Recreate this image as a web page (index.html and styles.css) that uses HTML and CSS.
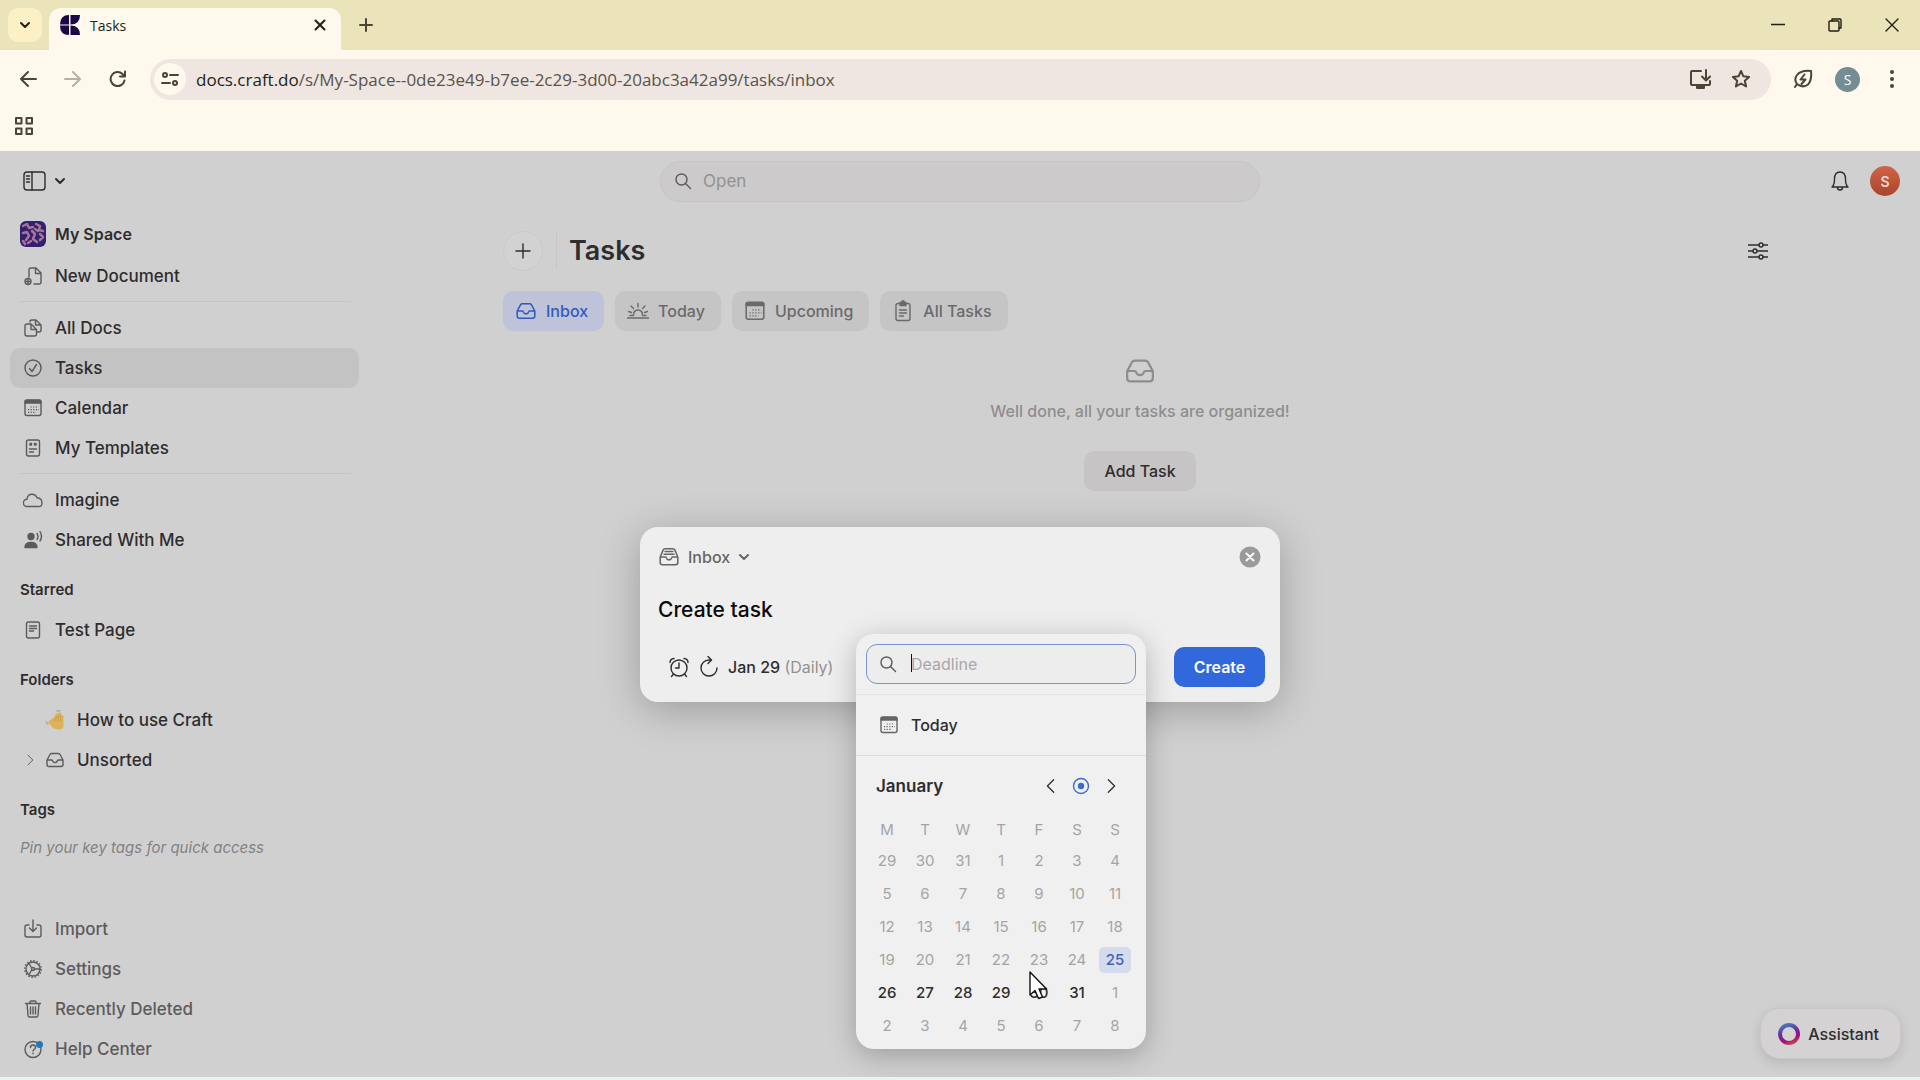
FILE: index.html
```html
<!DOCTYPE html>
<html lang="en">
<head>
<meta charset="utf-8">
<title>Tasks</title>
<link rel="stylesheet" href="styles.css">
</head>
<body>
<svg class="sprite" aria-hidden="true">
  <symbol id="chevron-down" viewBox="0 0 12 12"><path d="M2 4l4 4 4-4"/></symbol>
  <symbol id="chevron-left" viewBox="0 0 20 20"><path d="M13 3l-7 7 7 7"/></symbol>
  <symbol id="chevron-right" viewBox="0 0 20 20"><path d="M7 3l7 7-7 7"/></symbol>
  <symbol id="search" viewBox="0 0 18 18"><circle cx="7.500" cy="7.500" r="5.500"/><path d="M11.500 11.500l5 5"/></symbol>
  <symbol id="tray" viewBox="0 0 20 20"><path d="M2 10l3-5.500q.6-1 1.700-1h6.600q1.100 0 1.700 1L18 10v4.500q0 2-2 2H4q-2 0-2-2V10h4.500q.9 0 1.100.8a2.500 2.500 0 0 0 4.800 0q.2-.8 1.100-.8H18"/></symbol>
  <symbol id="tray-full" viewBox="0 0 20 20"><path d="M2 10l2.500-6q.6-1.500 2.200-1.500h6.600q1.600 0 2.200 1.500L18 10v5q0 2-2 2H4q-2 0-2-2v-5h4.500q.9 0 1.100.8a2.500 2.500 0 0 0 4.800 0q.2-.8 1.100-.8H18M6.500 5h7M5.500 7.500h9"/></symbol>
  <symbol id="calendar" viewBox="0 0 20 20"><rect x="2" y="2.500" width="16" height="15" rx="2"/><path d="M2 3.500q0-1.500 2-1.500h12q2 0 2 1.500V5H2z" fill="currentColor"/><path d="M7.600 9h8M5 11.700h11M5 14.400h8" stroke-dasharray="1.200 1.400" stroke-linecap="butt" stroke-width="1.200"/></symbol>
</svg>

<header class="browser">
  <div class="tabstrip">
    <button class="tabsearch" aria-label="Search tabs"><svg class="i12 heavy"><use href="#chevron-down"/></svg></button>
    <div class="tab">
      <svg class="favicon" viewBox="0 0 20 20"><path d="M9 0v9.500H0Q0 0 9 0zM9 20v-9.500H0Q0 20 9 20zM10.500 0H20q0 9.500-9.500 9.500zM10.500 20H20q0-9.500-9.500-9.500z"/></svg>
      <span class="tabtitle">Tasks</span>
      <button class="bare" aria-label="Close tab"><svg class="i12 heavy" viewBox="0 0 12 12"><path d="M1.500 1.500l9 9M10.500 1.500l-9 9"/></svg></button>
    </div>
    <button class="bare newtab" aria-label="New tab"><svg class="i14 heavy" viewBox="0 0 14 14"><path d="M7 1v12M1 7h12"/></svg></button>
    <div class="winctl">
      <button class="bare" aria-label="Minimize"><svg class="i14" viewBox="0 0 14 14"><path d="M0 6.500h14"/></svg></button>
      <button class="bare" aria-label="Restore"><svg class="i14" viewBox="0 0 14 14"><rect x="1" y="3" width="10" height="10" rx="1"/><path d="M4 3V1h8q1 0 1 1v8h-2"/></svg></button>
      <button class="bare" aria-label="Close"><svg class="i14" viewBox="0 0 14 14"><path d="M1 1l12 12M13 1L1 13"/></svg></button>
    </div>
  </div>
  <div class="toolbar">
    <button class="bare nav" aria-label="Back"><svg class="i18 heavy" viewBox="0 0 18 18"><path d="M17 9H2M9 2L2 9l7 7"/></svg></button>
    <button class="bare nav faded" aria-label="Forward"><svg class="i18 heavy" viewBox="0 0 18 18"><path d="M1 9h15M9 2l7 7-7 7"/></svg></button>
    <button class="bare nav" aria-label="Reload"><svg class="i18 heavy" viewBox="0 0 18 18"><path d="M15.500 10.500a7 7 0 1 1-2-6.500l2.500 2.500M16 1.500v5h-5"/></svg></button>
    <div class="urlbar">
      <button class="bare site" aria-label="Site information"><svg class="i18 heavy" viewBox="0 0 18 18"><circle cx="4" cy="5" r="2"/><path d="M9 5h8M1 13h8"/><circle cx="14" cy="13" r="2"/></svg></button>
      <span class="url"><b>docs.craft.do</b>/s/My-Space--0de23e49-b7ee-2c29-3d00-20abc3a42a99/tasks/inbox</span>
      <button class="bare" aria-label="Install app"><svg class="i22 heavy" viewBox="0 0 22 22"><path d="M12 3H3q-1 0-1 1v12q0 1 1 1h17q1 0 1-1v-3M17 2v10M13 8.500l4 4 4-4"/><path d="M8 17.500h7V20H8z" fill="currentColor"/></svg></button>
      <button class="bare" aria-label="Bookmark"><svg class="i20 heavy" viewBox="0 0 20 20"><path d="M10 2l2.400 5.300 5.700.6-4.300 3.800 1.300 5.800-5.100-3-5.100 3 1.300-5.800L1.900 7.900l5.700-.6z"/></svg></button>
    </div>
    <button class="bare" aria-label="Energy saver"><svg class="i20 heavy" viewBox="0 0 20 20"><path d="M2 18l2-3a7.500 7.500 0 0 1 0-9Q8 1 18 2q1 9-3 13.500-5 4-11-.500"/><path d="M11.500 5.500l-4 5h5l-4 4.500"/></svg></button>
    <button class="profile" aria-label="Profile">S</button>
    <button class="bare" aria-label="Menu"><svg class="i20 solid" viewBox="0 0 20 20"><circle cx="10" cy="3" r="2"/><circle cx="10" cy="10" r="2"/><circle cx="10" cy="17" r="2"/></svg></button>
  </div>
  <div class="bookmarks">
    <button class="bare" aria-label="Apps"><svg class="i20 heavy" viewBox="0 0 20 20"><path d="M2 2h5.500v5.500H2zM12.500 2H18v5.500h-5.500zM2 12.500h5.500V18H2zM12.500 12.500H18V18h-5.500z"/></svg></button>
  </div>
</header>

<div class="app">
  <div class="topbar">
    <div class="topleft">
      <button class="bare" aria-label="Toggle sidebar"><svg class="i24" viewBox="0 0 24 24"><rect x="1" y="3" width="21" height="18" rx="3"/><path d="M9 3v18M3.500 7h3M3.500 10h3M3.500 13h3"/></svg></button>
      <button class="bare" aria-label="View options"><svg class="i12 heavy"><use href="#chevron-down"/></svg></button>
    </div>
    <label class="opensearch"><svg class="i18"><use href="#search"/></svg><input type="text" placeholder="Open" aria-label="Open"></label>
    <div class="topright">
      <button class="bare" aria-label="Notifications"><svg class="i22" viewBox="0 0 22 22"><path d="M3 17q2.500-2 2.500-8 0-7 5.500-7t5.500 7q0 6 2.500 8zM8.500 17.500a2.500 2.500 0 0 0 5 0"/></svg></button>
      <button class="avatar" aria-label="Account">S</button>
    </div>
  </div>

  <div class="columns">
    <aside class="sidebar">
      <nav>
        <a class="row space" href="#"><svg class="spacelogo" viewBox="0 0 26 26"><rect width="26" height="26" rx="6" fill="#35206f"/><path d="M3 5l4-2 2 4 4-1M16 3l4 2-1 4 4 1M3 12l4-1 2 4-3 4M12 10l3 3-2 5 4 3M20 13l3 3-3 3M8 22l3-2M15 8l3 2M3 20l2 3" fill="none" stroke="#a5759c" stroke-width="2.500"/></svg><span>My Space</span></a>
        <a class="row" href="#"><svg class="i20" viewBox="0 0 20 20"><path d="M6 11V4q0-2 2-2h5l5 5v9q0 2-2 2h-5M12.500 2v5.500H18"/><circle cx="5" cy="15.500" r="3"/><path d="M5 13.500v4M3 15.500h4"/></svg>New Document</a>
        <hr>
        <a class="row" href="#"><svg class="i20" viewBox="0 0 20 20"><path d="M7 4V3.500Q7 2 9 2h4L18 7v5q0 2-2 2h-1.500M12.500 2v5H18M8 6H4Q2 6 2 8v8q0 2 2 2h7.500q2 0 2-2v-4.500zM8 6v5.500h5.500"/></svg>All Docs</a>
        <a class="row active" href="#"><svg class="i20" viewBox="0 0 20 20"><circle cx="10" cy="10" r="8"/><path d="M6.500 10.500l2.500 3 4.500-7"/></svg>Tasks</a>
        <a class="row" href="#"><svg class="i20"><use href="#calendar"/></svg>Calendar</a>
        <a class="row" href="#"><svg class="i20" viewBox="0 0 20 20"><rect x="3.500" y="2" width="13" height="16" rx="2"/><path d="M7 5.500h1.500V7H7zM11.500 5.500H13V7h-1.500z" fill="currentColor"/><path d="M6.500 11h7M6.500 14h4"/></svg>My Templates</a>
        <hr>
        <a class="row" href="#"><svg class="i20" viewBox="0 0 20 20"><path d="M4 16.500a3.600 3.600 0 0 1 0-7.200q.5-5 5-5 3.500 0 5 3.500 5 .5 5 5t-4 3.700z"/></svg>Imagine</a>
        <a class="row" href="#"><svg class="i20" viewBox="0 0 20 20"><g fill="currentColor"><circle cx="8" cy="6.500" r="3"/><path d="M2 17.500q0-5 6-5t6 5z"/></g><path d="M14 3.500q2 3 0 6M17 1.500q3 5 0 9.500"/></svg>Shared With Me</a>
        <h2>Starred</h2>
        <a class="row" href="#"><svg class="i20" viewBox="0 0 20 20"><rect x="3.500" y="2" width="13" height="16" rx="2"/><path d="M6.500 6h7M6.500 8.500h7M6.500 11h4"/></svg>Test Page</a>
        <h2>Folders</h2>
        <a class="row nested" href="#"><svg class="i20 wave" viewBox="0 0 20 20"><path d="M3 12L10 6l1-3 2 1 1-2 2 1 1 2 1.500 1V17q-1 3-5 2.500-6-1-7-3.500z" fill="#dcb35a" stroke="none"/><path d="M9.500 11l2.500-5M12.500 11l1.500-6M15.500 11V6.500" stroke="#c99c48" stroke-width="1"/><path d="M1 12l2 2M12 1l3-.5" stroke="#a9a7a8"/></svg>How to use Craft</a>
        <a class="row nested" href="#"><svg class="i14 twist"><use href="#chevron-right"/></svg><svg class="i20"><use href="#tray"/></svg>Unsorted</a>
        <h2>Tags</h2>
        <p class="hint">Pin your key tags for quick access</p>
      </nav>
      <nav class="foot">
        <a class="row" href="#"><svg class="i20" viewBox="0 0 20 20"><path d="M6 6H4Q2 6 2 8v8q0 2 2 2h12q2 0 2-2V8q0-2-2-2h-2M10 1v11M6.500 9l3.500 3.500L13.500 9"/></svg>Import</a>
        <a class="row" href="#"><svg class="i20" viewBox="0 0 20 20"><circle cx="10" cy="10" r="7"/><circle cx="10" cy="10" r="8.300" stroke-linecap="butt" stroke-dasharray="1.600 1.660"/><circle cx="10" cy="10" r="1.500"/><path d="M8.700 9L6 4.500M8.700 11L6 15.500M11.500 10H17"/></svg>Settings</a>
        <a class="row" href="#"><svg class="i20" viewBox="0 0 20 20"><path d="M2.500 4.500h15M7 4.500V3q0-1 1-1h4q1 0 1 1v1.500M4 4.500l1 12q.1 1.500 1.500 1.500h7q1.400 0 1.500-1.500l1-12M7.500 8v7M10 8v7M12.500 8v7"/></svg>Recently Deleted</a>
        <a class="row" href="#"><svg class="i20" viewBox="0 0 20 20"><circle cx="10" cy="10.500" r="8"/><path d="M7.500 8.500q0-2.500 2.500-2.500t2.500 2.500q0 1.200-1.500 2-1 .6-1 1.500M10 14.200v.6"/><circle cx="16.500" cy="5.500" r="3.500" fill="#2277bb" stroke="none"/></svg>Help Center</a>
      </nav>
    </aside>

    <main class="main">
      <div class="titlebar">
        <button class="add" aria-label="Add"><svg class="i16" viewBox="0 0 16 16"><path d="M8 1v14M1 8h14"/></svg></button>
        <h1>Tasks</h1>
        <button class="bare" aria-label="Filter"><svg class="i20" viewBox="0 0 20 20"><path d="M0 4h11M15 4h5M0 10h5M9 10h11M0 16h11M15 16h5"/><circle cx="13" cy="4" r="2"/><circle cx="7" cy="10" r="2"/><circle cx="13" cy="16" r="2"/></svg></button>
      </div>
      <div class="pills">
        <button class="pill on"><svg class="i22"><use href="#tray"/></svg>Inbox</button>
        <button class="pill"><svg class="i22" viewBox="0 0 22 22"><path d="M0 18h22M3 15.500h3.500M15.500 15.500H19M6.500 15.500q0-5.500 4.500-5.500t4.500 5.500M11 3.500V7M4 6l2.500 2.500M18 6l-2.500 2.500M1.500 11.500l3 1M20.500 11.500l-3 1"/></svg>Today</button>
        <button class="pill"><svg class="i22"><use href="#calendar"/></svg>Upcoming</button>
        <button class="pill"><svg class="i22" viewBox="0 0 22 22"><rect x="4" y="3.500" width="14" height="17" rx="2"/><path d="M8 2.500h6v3H8zM10 1h2v2h-2z" fill="currentColor"/><path d="M7.500 10h7M7.500 13h7M7.500 16h4"/></svg>All Tasks</button>
      </div>
      <section class="empty">
        <svg class="i32" viewBox="0 0 20 20"><use href="#tray"/></svg>
        <p>Well done, all your tasks are organized!</p>
        <button>Add Task</button>
      </section>
    </main>
  </div>

  <button class="assistant"><span class="ring"></span>Assistant</button>

  <div class="overlay">
    <form class="dialog">
      <div class="dhead">
        <button type="button" class="bare where"><svg class="i22"><use href="#tray-full"/></svg>Inbox<svg class="i12 heavy"><use href="#chevron-down"/></svg></button>
        <button type="button" class="bare" aria-label="Close"><svg class="i22" viewBox="0 0 22 22"><circle cx="11" cy="11" r="10.500" fill="#9b9a9b" stroke="none"/><path d="M7.500 7.500l7 7M14.500 7.500l-7 7" stroke="#fff" stroke-width="2"/></svg></button>
      </div>
      <input class="taskname" type="text" value="Create task" aria-label="Task name">
      <div class="dfoot">
        <button type="button" class="bare when"><svg class="i22" viewBox="0 0 22 22"><circle cx="11" cy="12" r="8"/><path d="M11 7v5H7.500M5.500 18L3.500 20.500M16.500 18l2 2.500M2 6.500q0-3.500 4-4M20 6.500q0-3.500-4-4"/></svg><svg class="i22" viewBox="0 0 22 22"><path d="M19 12a8 8 0 1 1-8-8h2M10 0.500L13.500 4 10 7.500"/></svg><span>Jan 29 <i>(Daily)</i></span></button>
        <button type="button" class="create">Create</button>
      </div>

      <div class="popover">
        <label class="deadline"><svg class="i18"><use href="#search"/></svg><span class="caret"></span><input type="text" placeholder="Deadline" aria-label="Deadline"></label>
        <button type="button" class="today"><svg class="i20"><use href="#calendar"/></svg>Today</button>
        <div class="month">
          <h3>January</h3>
          <button type="button" class="bare" aria-label="Previous month"><svg class="i18"><use href="#chevron-left"/></svg></button>
          <button type="button" class="bare now" aria-label="Current month"><svg class="i18" viewBox="0 0 18 18"><circle cx="9" cy="9" r="7.500"/><circle cx="9" cy="9" r="2.500" fill="currentColor"/></svg></button>
          <button type="button" class="bare" aria-label="Next month"><svg class="i18"><use href="#chevron-right"/></svg></button>
        </div>
        <table>
          <thead><tr><th>M</th><th>T</th><th>W</th><th>T</th><th>F</th><th>S</th><th>S</th></tr></thead>
          <tbody>
            <tr><td>29</td><td>30</td><td>31</td><td>1</td><td>2</td><td>3</td><td>4</td></tr>
            <tr><td>5</td><td>6</td><td>7</td><td>8</td><td>9</td><td>10</td><td>11</td></tr>
            <tr><td>12</td><td>13</td><td>14</td><td>15</td><td>16</td><td>17</td><td>18</td></tr>
            <tr><td>19</td><td>20</td><td>21</td><td>22</td><td>23</td><td>24</td><td><span class="cur">25</span></td></tr>
            <tr class="open"><td>26</td><td>27</td><td>28</td><td>29</td><td>30</td><td>31</td><td class="out">1</td></tr>
            <tr><td>2</td><td>3</td><td>4</td><td>5</td><td>6</td><td>7</td><td>8</td></tr>
          </tbody>
        </table>
        <svg class="pointer" viewBox="0 0 20 29"><path d="M1 1v23l5-4.500 3.500 8 4-1.500-3.500-8h7.500z"/></svg>
      </div>
    </form>
  </div>
</div>
</body>
</html>
```
FILE: styles.css
```css
* { box-sizing: border-box; }
body {
  margin: 0;
  min-height: 100vh;
  display: flex;
  flex-direction: column;
  font-family: Inter, sans-serif;
  font-size: 16px;
  color: #2e2d2e;
  background: #d1d0d1;
  border-bottom: 3px solid #e8f4ef;
}
h1, h2, h3, p { margin: 0; }
button, input { font: inherit; color: inherit; }
button { border: 0; padding: 0; background: none; display: flex; align-items: center; justify-content: center; }
input { border: 0; padding: 0; background: none; min-width: 0; outline: none; }
a { color: inherit; text-decoration: none; }
svg { flex: none; fill: none; stroke: currentColor; stroke-width: 1.4; stroke-linecap: round; stroke-linejoin: round; }
.sprite { position: absolute; width: 0; height: 0; }
.i12 { width: 12px; height: 12px; }
.i14 { width: 14px; height: 14px; }
.i16 { width: 16px; height: 16px; }
.i18 { width: 18px; height: 18px; }
.i20 { width: 20px; height: 20px; }
.i22 { width: 22px; height: 22px; }
.i24 { width: 24px; height: 24px; }
.i32 { width: 32px; height: 32px; }
.heavy { stroke-width: 2; }
.solid { fill: currentColor; stroke: none; }

/* Browser frame */
.browser { background: #fff8ec; color: #4b4536; font-family: "Open Sans", sans-serif; }
.tabstrip { height: 50px; padding-left: 8px; display: flex; align-items: center; background: #ebe3ba; }
.tabsearch { width: 34px; height: 34px; border-radius: 10px; background: #fbf1c4; color: #221f14; }
.tab {
  align-self: flex-end;
  width: 292px; height: 42px; margin-left: 7px; padding: 0 15px 8px 11px;
  display: flex; align-items: center; gap: 10px;
  border-radius: 12px 12px 0 0; background: #fff8ec; color: #221f14;
}
.favicon { width: 20px; height: 20px; fill: #190845; stroke: none; }
.tabtitle { flex: 1; font-size: 14px; }
.newtab { width: 50px; height: 34px; }
.winctl { margin-left: auto; display: flex; color: #221f14; }
.winctl button { width: 57px; height: 50px; }
.toolbar { height: 58px; padding: 0 18px 0 18px; display: flex; align-items: center; gap: 22px; }
.nav { width: 20px; }
.nav + .nav { margin-left: 3px; }
.faded { opacity: .4; }
.urlbar {
  flex: 1; height: 41px; padding: 0 20px 0 4px;
  display: flex; align-items: center; gap: 20px;
  border-radius: 21px; background: #efe6e1;
}
.site { width: 32px; height: 32px; border-radius: 50%; background: #fff8ec; margin-right: -10px; }
.url { flex: 1; font-size: 17px; white-space: nowrap; color: #5a534b; }
.url b { font-weight: 400; color: #221f14; }
.profile { width: 25px; height: 25px; border-radius: 50%; background: #748c93; color: #fff; font-size: 14px; }
.bookmarks { height: 43px; padding: 0 14px 8px; display: flex; align-items: center; }

/* App shell */
.app { position: relative; flex: 1; display: flex; flex-direction: column; }
.topbar { height: 60px; padding: 0 20px; display: grid; grid-template-columns: 1fr 600px 1fr; align-items: center; }
.topleft, .topright { display: flex; align-items: center; }
.topleft { padding-left: 3px; gap: 7px; }
.topright { justify-content: flex-end; gap: 19px; }
.opensearch {
  height: 41px; padding: 0 13px; display: flex; align-items: center; gap: 11px;
  border-radius: 20px; border: 1px solid #c6c4c5; background: #cccacb; color: #5c5b5c; font-size: 17px;
}
::placeholder { color: #929192; opacity: 1; }
.avatar { width: 30px; height: 30px; border-radius: 50%; background: linear-gradient(#d2634a, #a8452a); color: #f0dcd6; font-size: 14px; font-weight: 600; }
.columns { flex: 1; display: flex; }

.sidebar { width: 360px; padding: 0 0 8px; display: flex; flex-direction: column; }
.sidebar nav { padding: 0 1px 0 10px; }
.sidebar .foot { margin-top: auto; color: #5c5b5c; }
.row { height: 40px; padding-left: 13px; display: flex; align-items: center; gap: 12px; border-radius: 10px; font-size: 17px; font-weight: 500; }
.row svg { color: #5c5b5c; }
.space { height: 45px; padding-left: 10px; gap: 9px; font-size: 16px; font-weight: 600; }
.spacelogo { width: 26px; height: 26px; stroke: none; }
.active { background: #c4c3c4; }
.sidebar hr { height: 1px; margin: 5px 8px 6px 10px; border: 0; background: #c6c4c5; }
.sidebar h2 { padding: 20px 0 0 10px; height: 50px; font-size: 15px; line-height: 20px; font-weight: 600; }
.nested { padding-left: 35px; }
.twist { margin-left: -22px; margin-right: -4px; }
.hint { padding: 8px 10px; font-size: 15px; line-height: 20px; font-style: italic; color: #828182; }

.main { flex: 1; padding: 20px 143px 0; }
.titlebar { height: 40px; display: flex; align-items: center; }
.add { width: 40px; height: 40px; border-radius: 50%; background: #d3d2d3; border: 1px solid #cbc9ca; }
.titlebar h1 { flex: 1; margin-left: 13px; padding-left: 12px; border-left: 1px solid #c6c4c5; font-size: 27px; line-height: 36px; font-weight: 600; }
.titlebar .bare { margin-right: 9px; }
.pills { display: flex; gap: 11px; margin-top: 20px; }
.pill { height: 40px; padding: 0 16px 0 12px; gap: 9px; border-radius: 10px; background: #c6c5c6; color: #6b6a6b; font-weight: 500; }
.on { background: #bec3d9; color: #315bb8; }
.empty { display: flex; flex-direction: column; align-items: center; padding-top: 24px; color: #8e8d8e; font-weight: 500; }
.empty p { margin-top: 14px; line-height: 20px; }
.empty button { height: 40px; margin-top: 30px; padding: 0 20px; border-radius: 10px; background: #c6c4c5; color: #2e2d2e; }

.assistant {
  position: absolute; right: 19px; bottom: 18px;
  height: 51px; padding: 0 21px 0 17px; gap: 8px;
  border-radius: 20px; border: 1px solid #c9c7c8; background: #d4d2d3;
  box-shadow: 0 4px 12px rgba(0, 0, 0, .12);
  font-weight: 500;
}
.ring { width: 22px; height: 22px; border-radius: 50%; border: 4px solid transparent; background: linear-gradient(#d4d2d3, #d4d2d3) padding-box, linear-gradient(160deg, #3b9bc4, #6a2c9c 45%, #a80f78 70%, #dc6a50) border-box; }

/* Create-task dialog */
.overlay { position: absolute; inset: 0; padding-top: 376px; display: flex; justify-content: center; align-items: flex-start; }
.dialog {
  position: relative; width: 640px; height: 175px; padding: 19px 15px 15px 18px;
  display: flex; flex-direction: column; justify-content: space-between;
  border-radius: 18px; background: #efeeef; box-shadow: 0 8px 40px rgba(0, 0, 0, .25);
}
.dhead, .dfoot { display: flex; justify-content: space-between; align-items: center; }
.dhead { padding-right: 4px; }
.where { gap: 8px; font-weight: 500; color: #666566; }
.taskname { margin-top: 5px; font-size: 21px; line-height: 28px; height: 28px; font-weight: 500; color: #0a0a0a; }
.when { gap: 8px; padding-left: 10px; font-weight: 500; }
.when i { font-style: normal; font-weight: 400; color: #929192; }
.create { width: 91px; height: 40px; border-radius: 10px; background: #3169dd; color: #fff; font-weight: 600; }

.popover {
  position: absolute; left: 216px; top: 107px; width: 290px; height: 415px;
  border-radius: 18px; background: #f0f0f0; box-shadow: 0 6px 28px rgba(0, 0, 0, .25);
}
.deadline {
  position: relative; height: 40px; margin: 10px; padding: 0 12px; display: flex; align-items: center; gap: 14px;
  border-radius: 11px; border: 1px solid #7f93cf; color: #5c5b5c; background: #eeedee;
}
.deadline ::placeholder { color: #a8a7a8; }
.caret { position: absolute; left: 44px; top: 9px; width: 1px; height: 18px; background: #111; }
.today { width: 100%; height: 62px; padding-left: 23px; gap: 12px; justify-content: flex-start; border-top: 1px solid #e6e5e6; border-bottom: 1px solid #dedddE; font-weight: 500; }
.today svg { color: #666566; }
.month { height: 60px; padding: 0 26px 0 20px; display: flex; align-items: center; gap: 12px; }
.month h3 { flex: 1; font-size: 17px; font-weight: 600; }
.now { color: #3f6cc9; }
table { width: 266px; margin: 0 12px; border-collapse: collapse; table-layout: fixed; font-size: 15px; color: #a5a4a5; }
th, td { height: 33px; padding: 0; text-align: center; font-weight: 400; line-height: 20px; }
th { height: 28px; }
.open td { color: #2e2d2e; font-weight: 500; }
.open .out { color: #a5a4a5; font-weight: 400; }
.cur { display: block; width: 32px; margin: 0 auto; line-height: 26px; border-radius: 5px; background: #d3dbec; color: #4463ad; font-weight: 500; }
.pointer { position: absolute; left: 173px; top: 337px; width: 20px; height: 29px; fill: #fff; stroke: #111; }
```
